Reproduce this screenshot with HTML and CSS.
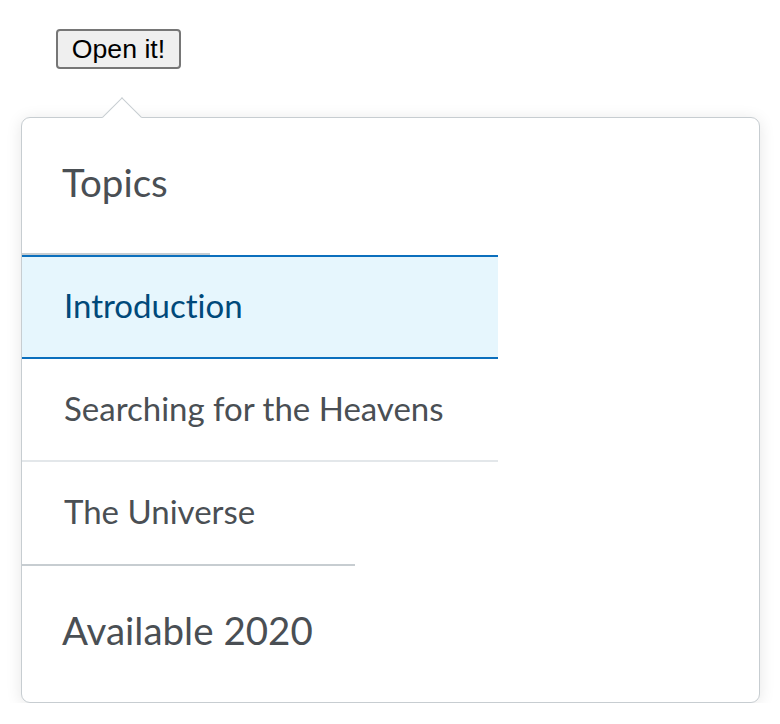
FILE: index.html
```html
<!DOCTYPE html>
<html lang="en">
<head>
<meta charset="utf-8">
<title>Popover</title>
<link rel="stylesheet" href="styles.css">
</head>
<body>
<div class="stage">
  <button class="trigger" type="button">Open it!</button>
  <div class="popover">
    <div class="group-title">Topics</div>
    <div class="rule rule-short"></div>
    <ul class="menu">
      <li class="item selected">Introduction</li>
      <li class="item">Searching for the Heavens</li>
      <li class="item last">The Universe</li>
    </ul>
    <div class="rule rule-mid"></div>
    <div class="group-title">Available 2020</div>
  </div>
</div>
</body>
</html>
```

FILE: styles.css
```css
html, body {
  margin: 0;
  padding: 0;
  background: #ffffff;
}

.stage {
  display: flex;
  flex-direction: column;
  align-items: flex-start;
  padding: 29px 0 0 21px;
}

.trigger {
  margin-left: 35px;
  width: 125px;
  height: 40px;
  box-sizing: border-box;
  padding: 0 12px;
  font-family: "Liberation Sans", Arial, sans-serif;
  font-size: 26.67px;
  color: #000;
  background: #efefef;
  border: 2px solid #767676;
  border-radius: 4px;
}

.popover {
  position: relative;
  margin-top: 48px;
  width: 739px;
  height: 586px;
  box-sizing: border-box;
  background: #fff;
  border: 1px solid #c7cdd1;
  border-radius: 9px;
  box-shadow: 0 2px 16px rgba(0, 0, 0, 0.10);
  display: flex;
  flex-direction: column;
  font-family: Lato, "Noto Sans", sans-serif;
  font-variant-ligatures: none;
  color: #4a4f54;
}

.popover::before {
  content: "";
  position: absolute;
  left: 86px;
  top: -15px;
  width: 28px;
  height: 28px;
  box-sizing: border-box;
  background: #fff;
  border-top: 1px solid #c7cdd1;
  border-left: 1px solid #c7cdd1;
  transform: rotate(45deg);
}

.group-title {
  position: relative;
  height: 135px;
  box-sizing: border-box;
  display: flex;
  align-items: center;
  padding: 0 0 6px 40px;
  font-size: 38.5px;
  line-height: 1;
}

.rule {
  height: 2px;
  background: #c7cdd1;
}

.rule-short {
  width: 188px;
}

.rule-mid {
  width: 333px;
}

.menu {
  list-style: none;
  margin: 0;
  padding: 0;
  width: 476px;
}

.item {
  height: 103px;
  box-sizing: border-box;
  display: flex;
  align-items: center;
  padding: 0 0 4px 42px;
  font-size: 33px;
  border-bottom: 2px solid #e3e7ea;
}

.item.last {
  height: 102px;
  border-bottom: none;
}

.item.selected {
  height: 104px;
  background: #e6f6fd;
  color: #00497a;
  border-top: 2px solid #0b6fbd;
  border-bottom: 2px solid #0b6fbd;
}
```
